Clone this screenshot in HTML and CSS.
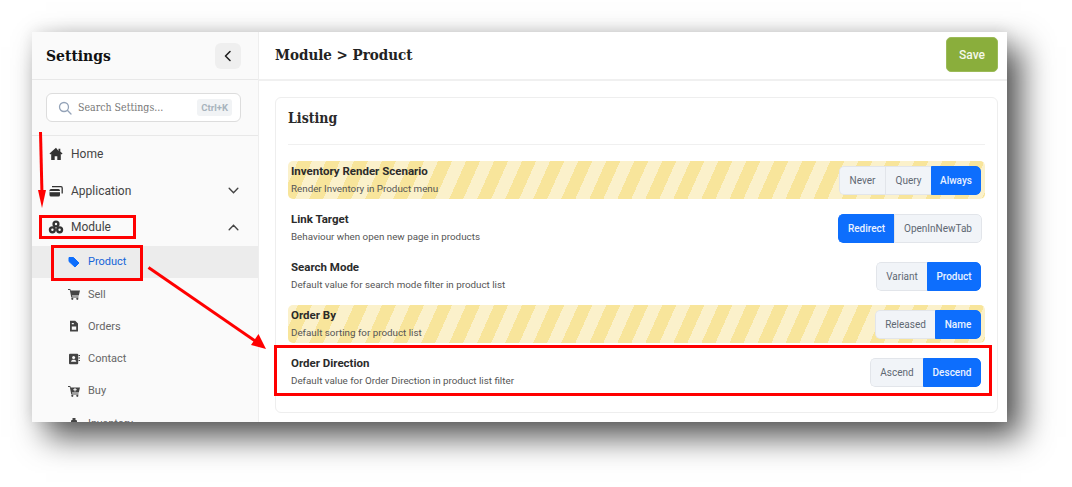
FILE: index.html
```html
<!DOCTYPE html>
<html lang="en">
<head>
  <meta charset="UTF-8" />
  <meta name="viewport" content="width=device-width, initial-scale=1.0" />
  <title>Settings - Module - Product</title>
  <link rel="stylesheet" href="styles.css">
</head>
<body>

  <div class="window">
    <aside class="sidebar">
      <div class="side-head">
        <h1>Settings</h1>
        <button class="collapse">
          <svg width="14" height="14" viewBox="0 0 14 14"><path d="M9 2.500 4.500 7 9 11.500" fill="none" stroke="#222" stroke-width="1.600" stroke-linecap="round" stroke-linejoin="round"/></svg>
        </button>
      </div>

      <div class="search-wrap">
        <div class="search">
          <svg width="14" height="14" viewBox="0 0 14 14"><circle cx="6" cy="6" r="4.500" fill="none" stroke="#94a3b8" stroke-width="1.300"/><path d="m9.300 9.300 3.700 3.700" stroke="#94a3b8" stroke-width="1.300" stroke-linecap="round"/></svg>
          <span class="search-text">Search Settings...</span>
          <span class="kbd">Ctrl+K</span>
        </div>
      </div>

      <nav class="nav">
        <a class="nav-item">
          <svg class="nav-icon" viewBox="0 0 16 16"><path d="M8 1.800 1.500 7.600l.8.900.9-.8V14h3.500v-3.800h2.600V14h3.500V7.700l.9.800.8-.9-2.200-2V2.800h-1.800v2.100z" fill="#333"/></svg>
          <span>Home</span>
        </a>
        <a class="nav-item">
          <svg class="nav-icon" viewBox="0 0 16 16"><rect x="1.500" y="6" width="10.500" height="7.500" rx="1.500" fill="#333"/><rect x="1.500" y="8" width="10.500" height="1.200" fill="#fafafa"/><path d="M4 3.700h9a1.200 1.200 0 0 1 1.200 1.200v5.600" fill="none" stroke="#333" stroke-width="1.300"/></svg>
          <span>Application</span>
          <svg class="chev" viewBox="0 0 12 12"><path d="m2 4 4 4 4-4" fill="none" stroke="#444" stroke-width="1.300" stroke-linecap="round"/></svg>
        </a>
        <a class="nav-item">
          <svg class="nav-icon" viewBox="0 0 16 16"><g fill="#333"><circle cx="8" cy="5" r="3.600"/><circle cx="4.400" cy="10.800" r="3.600"/><circle cx="11.600" cy="10.800" r="3.600"/></g><g fill="#fafafa"><circle cx="4.400" cy="10.800" r="1.200"/><circle cx="11.600" cy="10.800" r="1.200"/><circle cx="8" cy="5" r="1.200"/></g></svg>
          <span>Module</span>
          <svg class="chev" viewBox="0 0 12 12"><path d="m2 8 4-4 4 4" fill="none" stroke="#444" stroke-width="1.300" stroke-linecap="round"/></svg>
        </a>

        <div class="sub">
          <a class="sub-item active">
            <svg class="sub-icon" viewBox="0 0 12 12"><path d="M1 1.500h4.500L11 7l-4 4-6-5.500z" fill="#0d6efd" stroke="#0d6efd" stroke-linejoin="round"/></svg>
            <span>Product</span>
          </a>
          <a class="sub-item">
            <svg class="sub-icon" viewBox="0 0 12 12"><path d="M0 1h2.300l.4 1.500H12l-1.200 5H4l.2 1h6.300v1H3.300L1.800 2H0z" fill="#444"/><circle cx="4.300" cy="10.800" r="1.100" fill="#444"/><circle cx="9.300" cy="10.800" r="1.100" fill="#444"/></svg>
            <span>Sell</span>
          </a>
          <a class="sub-item">
            <svg class="sub-icon" viewBox="0 0 12 12"><path fill-rule="evenodd" d="M2 .8h5.200L10 3.600V11a.5.500 0 0 1-.5.500h-7A.5.500 0 0 1 2 11zM3.800 6.500v3.200h4.400V6.500zM3.800 3v1.200h2V3z" fill="#444"/></svg>
            <span>Orders</span>
          </a>
          <a class="sub-item">
            <svg class="sub-icon" viewBox="0 0 12 12"><rect x="1" y=".8" width="9.200" height="10.400" rx="1" fill="#444"/><circle cx="5.600" cy="4.600" r="1.500" fill="#fafafa"/><path d="M3 8.800c.3-2.600 5-2.600 5.300 0z" fill="#fafafa"/><path d="M10.500 2.500H12M10.500 5H12M10.500 7.500H12" stroke="#444"/></svg>
            <span>Contact</span>
          </a>
          <a class="sub-item">
            <svg class="sub-icon" viewBox="0 0 12 12"><path d="M0 1h2.300l.4 1.500H12l-1.200 5H4l.2 1h6.300v1H3.300L1.800 2H0z" fill="#444"/><path d="M7 3v3.500M5.300 4.700h3.400" stroke="#fafafa"/><circle cx="4.300" cy="10.800" r="1.100" fill="#444"/><circle cx="9.300" cy="10.800" r="1.100" fill="#444"/></svg>
            <span>Buy</span>
          </a>
          <a class="sub-item">
            <svg class="sub-icon" viewBox="0 0 12 12"><rect x="3" y="3" width="6" height="8" rx="1" fill="#444"/><rect x="4.500" y="1" width="3" height="2" fill="#444"/></svg>
            <span>Inventory</span>
          </a>
        </div>
      </nav>
    </aside>

    <main class="main">
      <header class="main-head">
        <h2>Module &gt; Product</h2>
        <button class="save">Save</button>
      </header>

      <section class="card">
        <h3>Listing</h3>

        <div class="row striped">
          <div class="row-text">
            <div class="row-title">Inventory Render Scenario</div>
            <div class="row-desc">Render Inventory in Product menu</div>
          </div>
          <div class="seg">
            <button style="width:46px">Never</button>
            <button style="width:46px">Query</button>
            <button class="on" style="width:50px">Always</button>
          </div>
        </div>

        <div class="row">
          <div class="row-text">
            <div class="row-title">Link Target</div>
            <div class="row-desc">Behaviour when open new page in products</div>
          </div>
          <div class="seg seg-wide">
            <button class="on" style="width:56px">Redirect</button>
            <button style="width:88px">OpenInNewTab</button>
          </div>
        </div>

        <div class="row">
          <div class="row-text">
            <div class="row-title">Search Mode</div>
            <div class="row-desc">Default value for search mode filter in product list</div>
          </div>
          <div class="seg">
            <button style="width:51px">Variant</button>
            <button class="on" style="width:54px">Product</button>
          </div>
        </div>

        <div class="row striped">
          <div class="row-text">
            <div class="row-title">Order By</div>
            <div class="row-desc">Default sorting for product list</div>
          </div>
          <div class="seg">
            <button style="width:60px">Released</button>
            <button class="on" style="width:46px">Name</button>
          </div>
        </div>

        <div class="row">
          <div class="row-text">
            <div class="row-title">Order Direction</div>
            <div class="row-desc">Default value for Order Direction in product list filter</div>
          </div>
          <div class="seg">
            <button style="width:53px">Ascend</button>
            <button class="on" style="width:58px">Descend</button>
          </div>
        </div>
      </section>
    </main>
  </div>

  <!-- red callouts drawn over the screenshot -->
  <svg class="marks" width="1072" height="487" viewBox="0 0 1072 487">
    <g fill="none" stroke="#f00" stroke-width="3">
      <rect x="40.500" y="216.500" width="94" height="21"/>
      <rect x="52.500" y="246.500" width="89" height="33"/>
      <rect x="275.500" y="346.500" width="715" height="48"/>
      <path d="M40.500 132 42 195"/>
      <path d="M148.500 267.500 256 341.500"/>
    </g>
    <path d="M38 190h8l-4 18z" fill="#f00"/>
    <path d="M251 345 258.500 334 266 349z" fill="#f00"/>
  </svg>

</body>
</html>
```

FILE: styles.css
```css
* {
  box-sizing: border-box;
}

html, body {
  height: 487px;
  overflow: hidden;
}

body {
  margin: 0;
  padding: 32px 65px 0 32px;
  background: #fff;
  font-family: Roboto, "Liberation Sans", sans-serif;
  color: #222;
}

.window {
  display: flex;
  width: 975px;
  height: 390px;
  background: #fff;
  overflow: hidden;
  box-shadow: 14px 15px 30px rgba(0, 0, 0, 0.68), 0 -2px 14px rgba(0, 0, 0, 0.08);
}

/* sidebar */
.sidebar {
  width: 227px;
  flex-shrink: 0;
  background: #fafafa;
  border-right: 1px solid #eee;
}

.side-head {
  display: flex;
  align-items: center;
  justify-content: space-between;
  height: 48px;
  padding: 0 17px 0 14px;
  border-bottom: 1px solid #e8e8e8;
}

.side-head h1 {
  margin: 0 0 1px;
  font-family: "DejaVu Serif Condensed", "DejaVu Serif", serif;
  font-size: 15.500px;
  font-weight: 700;
  color: #111;
}

.collapse {
  display: flex;
  align-items: center;
  justify-content: center;
  width: 26px;
  height: 26px;
  padding: 0;
  background: #efefef;
  border: none;
  border-radius: 6px;
}

.search-wrap {
  padding: 13px 17px 13px 14px;
  border-bottom: 1px solid #e8e8e8;
}

.search {
  display: flex;
  align-items: center;
  height: 29px;
  padding: 0 8px 0 11px;
  background: #fff;
  border: 1px solid #ddd;
  border-radius: 6px;
}

.search-text {
  margin: 0 0 1px 6px;
  font-family: "DejaVu Serif Condensed", "DejaVu Serif", serif;
  font-size: 10.500px;
  color: #777;
}

.kbd {
  margin-left: auto;
  padding: 3px 4px;
  background: #f1f3f5;
  border-radius: 3px;
  font-size: 9.500px;
  font-weight: 700;
  color: #a8b3bd;
}

.nav {
  display: flex;
  flex-direction: column;
}

.nav-item {
  display: flex;
  align-items: center;
  height: 36.500px;
  padding: 0 18px 0 16px;
  font-size: 12px;
  color: #444;
}

.nav-icon {
  width: 16px;
  height: 16px;
  margin-right: 7px;
}

.chev {
  width: 13px;
  height: 13px;
  margin-left: auto;
}

.sub-item {
  display: flex;
  align-items: center;
  height: 32.200px;
  padding: 1px 0 0 36px;
  font-size: 11px;
  color: #666;
}

.sub-item.active {
  padding-top: 0;
  background: #ececec;
  color: #1565d8;
}

.sub-icon {
  width: 12px;
  height: 12px;
  margin-right: 8px;
}

/* main panel */
.main {
  flex: 1;
  min-width: 0;
}

.main-head {
  display: flex;
  align-items: center;
  justify-content: space-between;
  height: 49px;
  padding: 0 9px 2px 16px;
  border-bottom: 2px solid #f0f0f0;
}

.main-head h2 {
  margin: 0;
  font-family: "DejaVu Serif Condensed", "DejaVu Serif", serif;
  font-size: 15px;
  font-weight: 700;
  color: #222;
}

.save {
  width: 52px;
  height: 35px;
  background: #8aae3c;
  border: 1px solid #9cbb58;
  border-radius: 5px;
  font-family: Roboto, sans-serif;
  font-size: 12px;
  font-weight: 500;
  color: #f4f8ea;
}

.card {
  display: flex;
  flex-direction: column;
  gap: 10px;
  height: 316px;
  margin: 16px 9px 0 16px;
  padding: 0 12px;
  border: 1px solid #eee;
  border-radius: 6px;
}

.card h3 {
  height: 47px;
  margin: 0 0 6px;
  padding-top: 12px;
  border-bottom: 1px solid #f0f0f0;
  font-family: "DejaVu Serif Condensed", "DejaVu Serif", serif;
  font-size: 14px;
  font-weight: 700;
  color: #2a2a2a;
}

.row {
  display: flex;
  align-items: center;
  justify-content: space-between;
  height: 38px;
  padding: 0 4px 0 3px;
  border-radius: 5px;
}

.row-text {
  padding-bottom: 2px;
}

.striped {
  background: repeating-linear-gradient(114deg, #fbf1cb 0, #fbf1cb 9.100px, #f8e59b 9.100px, #f8e59b 21.900px, #fbf1cb 21.900px, #fbf1cb 25.600px);
}

.row-title {
  font-size: 11.500px;
  font-weight: 700;
  line-height: 17px;
  color: #2b2b2b;
}

.row-desc {
  margin-top: 2px;
  font-size: 9.800px;
  line-height: 14px;
  color: #555;
}

.seg {
  display: flex;
  height: 29px;
  border-radius: 5px;
  overflow: hidden;
}

.seg-wide {
  margin-right: -1px;
}

.seg button {
  padding: 0;
  background: #f1f4f8;
  border: 1px solid #e2e5ea;
  border-right-width: 0;
  font-family: Roboto, sans-serif;
  font-size: 10px;
  color: #5f6873;
}

.seg button:first-child {
  border-radius: 5px 0 0 5px;
}

.seg button:last-child {
  border-right-width: 1px;
  border-radius: 0 5px 5px 0;
}

.seg .on {
  background: #0d6efd;
  border-color: #0d6efd;
  font-weight: 500;
  color: #eaf2ff;
}

/* callouts */
.marks {
  position: absolute;
  top: 0;
  left: 0;
}
```
